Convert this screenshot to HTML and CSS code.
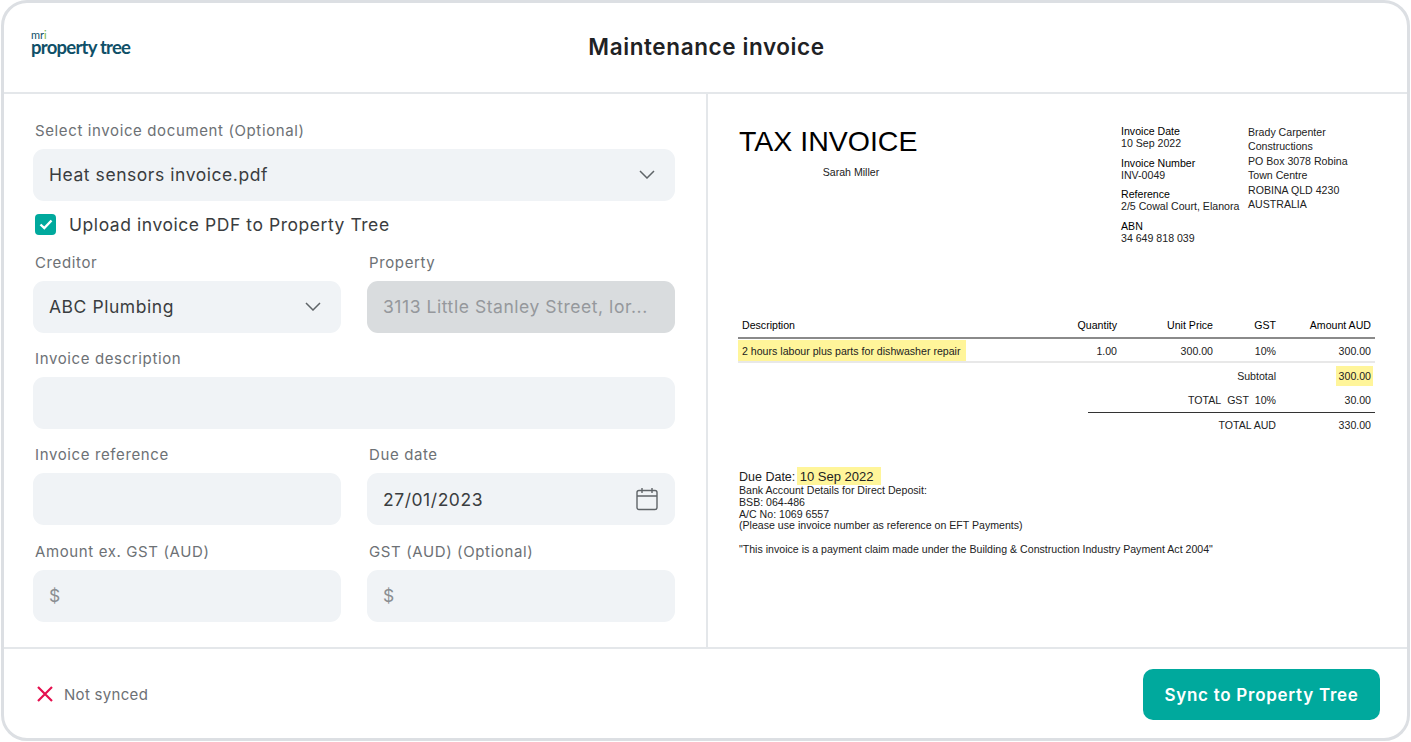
FILE: index.html
```html
<!DOCTYPE html>
<html lang="en">
<head>
    <meta charset="UTF-8">
    <title>Maintenance invoice</title>
    <link rel="stylesheet" href="styles.css">
</head>
<body>
    <div class="frame">
        <header class="top">
            <div class="logo">
                <span class="logo-mri">mr<span class="logo-i">i</span></span>
                <span class="logo-name">property tree</span>
            </div>
            <h1 class="title">Maintenance invoice</h1>
        </header>

        <main class="panes">
            <form class="form">
                <div class="group wide">
                    <label class="label">Select invoice document (Optional)</label>
                    <div class="field field-doc">
                        <span>Heat sensors invoice.pdf</span>
                        <svg class="chev" width="16" height="9" viewBox="0 0 16 9" fill="none"><path d="M1 1l7 7 7-7" stroke="#5f6468" stroke-width="1.5"/></svg>
                    </div>
                </div>
                <div class="check-row wide">
                    <span class="check">
                        <svg width="14" height="11" viewBox="0 0 14 11" fill="none"><path d="M1.5 5.5l3.8 3.6 7.2-7.6" stroke="#fff" stroke-width="2.4"/></svg>
                    </span>
                    <span>Upload invoice PDF to Property Tree</span>
                </div>
                <div class="group">
                    <label class="label">Creditor</label>
                    <div class="field">
                        <span>ABC Plumbing</span>
                        <svg class="chev" width="16" height="9" viewBox="0 0 16 9" fill="none"><path d="M1 1l7 7 7-7" stroke="#5f6468" stroke-width="1.5"/></svg>
                    </div>
                </div>
                <div class="group">
                    <label class="label">Property</label>
                    <div class="field disabled"><span>3113 Little Stanley Street, lor...</span></div>
                </div>
                <div class="group wide">
                    <label class="label">Invoice description</label>
                    <div class="field"></div>
                </div>
                <div class="group">
                    <label class="label">Invoice reference</label>
                    <div class="field"></div>
                </div>
                <div class="group">
                    <label class="label">Due date</label>
                    <div class="field">
                        <span>27/01/2023</span>
                        <svg class="cal" width="22" height="24" viewBox="0 0 22 24" fill="none" stroke="#5f6468" stroke-width="1.4"><rect x="1" y="3.5" width="20" height="19" rx="2"/><path d="M1 9h20M6 1v5M16 1v5"/></svg>
                    </div>
                </div>
                <div class="group">
                    <label class="label">Amount ex. GST (AUD)</label>
                    <div class="field muted"><span>$</span></div>
                </div>
                <div class="group">
                    <label class="label">GST (AUD) (Optional)</label>
                    <div class="field muted"><span>$</span></div>
                </div>
            </form>

            <section class="invoice">
                <div class="inv-head">
                    <div class="inv-brand">
                        <div class="inv-title">TAX INVOICE</div>
                        <div class="inv-name">Sarah Miller</div>
                    </div>
                    <div class="inv-meta">
                        <div class="meta-item"><div class="meta-key">Invoice Date</div><div>10 Sep 2022</div></div>
                        <div class="meta-item"><div class="meta-key">Invoice Number</div><div>INV-0049</div></div>
                        <div class="meta-item"><div class="meta-key">Reference</div><div>2/5 Cowal Court, Elanora</div></div>
                        <div class="meta-item"><div class="meta-key">ABN</div><div>34 649 818 039</div></div>
                    </div>
                    <div class="inv-addr">Brady Carpenter<br>Constructions<br>PO Box 3078 Robina<br>Town Centre<br>ROBINA QLD 4230<br>AUSTRALIA</div>
                </div>

                <div class="row row-head">
                    <span class="col-desc">Description</span>
                    <span class="col-qty">Quantity</span>
                    <span class="col-price">Unit Price</span>
                    <span class="col-gst">GST</span>
                    <span class="col-amt">Amount AUD</span>
                </div>
                <div class="row row-item">
                    <span class="col-desc"><span class="mark mark-desc">2 hours labour plus parts for dishwasher repair</span></span>
                    <span class="col-qty">1.00</span>
                    <span class="col-price">300.00</span>
                    <span class="col-gst">10%</span>
                    <span class="col-amt">300.00</span>
                </div>
                <div class="total">
                    <span class="total-key">Subtotal</span>
                    <span class="total-val"><span class="mark mark-sub">300.00</span></span>
                </div>
                <div class="total total-gst">
                    <span class="total-key">TOTAL&nbsp; GST&nbsp; 10%</span>
                    <span class="total-val">30.00</span>
                </div>
                <div class="total total-aud">
                    <span class="total-key">TOTAL AUD</span>
                    <span class="total-val">330.00</span>
                </div>

                <div class="inv-foot">
                    <div class="due">Due Date: <span class="mark mark-due">10 Sep 2022&nbsp;</span></div>
                    <div>Bank Account Details for Direct Deposit:</div>
                    <div>BSB: 064-486</div>
                    <div>A/C No: 1069 6557</div>
                    <div>(Please use invoice number as reference on EFT Payments)</div>
                    <p class="claim">"This invoice is a payment claim made under the Building &amp; Construction Industry Payment Act 2004"</p>
                </div>
            </section>
        </main>

        <footer class="bottom">
            <div class="status">
                <svg width="18" height="18" viewBox="0 0 18 18" fill="none"><path d="M2 2l14 14M16 2L2 16" stroke="#e5104f" stroke-width="2.2"/></svg>
                <span>Not synced</span>
            </div>
            <button class="sync" type="button">Sync to Property Tree</button>
        </footer>
    </div>
</body>
</html>
```

FILE: styles.css
```css
* {
    box-sizing: border-box;
}

body {
    margin: 0;
    background: #fff;
    font-family: 'Inter', sans-serif;
    color: #3a3d40;
}

.frame {
    width: 1409px;
    height: 741px;
    margin: 0 1px;
    border: 3px solid #dcdfe3;
    border-radius: 26px;
    display: flex;
    flex-direction: column;
    overflow: hidden;
}

.top {
    height: 91px;
    flex: none;
    position: relative;
    display: flex;
    align-items: center;
    justify-content: center;
    border-bottom: 2px solid #e4e7ea;
}

.title {
    margin: 0 0 2px 2px;
    font-size: 22.5px;
    font-weight: 600;
    letter-spacing: 0.6px;
    color: #1f2224;
}

.logo {
    position: absolute;
    left: 27px;
    top: 28px;
    display: flex;
    flex-direction: column;
    color: #0f5068;
}

.logo-mri {
    font-family: 'Lato', sans-serif;
    font-size: 11px;
    line-height: 7px;
    height: 7px;
    font-weight: 400;
}

.logo-i {
    color: #7ab648;
}

.logo-name {
    font-family: 'Lato', sans-serif;
    font-size: 18.5px;
    line-height: 18px;
    font-weight: 700;
    letter-spacing: -0.75px;
}

.panes {
    flex: 1;
    display: flex;
    min-height: 0;
}

.form {
    width: 704px;
    flex: none;
    padding: 26px 30px 0 29px;
    display: grid;
    grid-template-columns: 308px 308px;
    grid-auto-rows: min-content;
    column-gap: 26px;
    row-gap: 15.33px;
    border-right: 2px solid #e4e7ea;
}

.wide {
    grid-column: 1 / 3;
}

.label {
    display: block;
    margin: 0 0 7px 2px;
    font-size: 15px;
    line-height: 22px;
    color: #6d7175;
    letter-spacing: 0.62px;
}

.field {
    height: 52px;
    padding: 0 16px;
    border-radius: 11px;
    background: #f0f3f6;
    display: flex;
    align-items: center;
    justify-content: space-between;
    font-size: 17.5px;
    letter-spacing: 0.55px;
    white-space: nowrap;
    color: #3a3d40;
}

.field-doc {
    padding-bottom: 2px;
}

.field.disabled {
    background: #d9dcde;
    color: #95989c;
}

.field.muted {
    color: #8a8e92;
}

.chev {
    margin-right: 4px;
}

.cal {
    margin-right: 1px;
}

.check-row {
    display: flex;
    align-items: center;
    gap: 13px;
    height: 22px;
    margin: -3px 0 1px 2px;
    font-size: 17.5px;
    letter-spacing: 0.55px;
}

.check {
    width: 21px;
    height: 21px;
    border-radius: 4px;
    background: #00a99d;
    display: flex;
    align-items: center;
    justify-content: center;
}

.invoice {
    flex: 1;
    min-width: 0;
    padding: 33px 32px 0 30px;
    font-family: 'Liberation Sans', sans-serif;
    font-size: 10.6px;
    color: #222;
}

.inv-head {
    display: flex;
    height: 192px;
}

.inv-brand {
    width: 383px;
    flex: none;
}

.inv-title {
    margin: -1px 0 0 1px;
    font-size: 28.5px;
    line-height: 30px;
    color: #000;
}

.inv-name {
    width: 226px;
    margin-top: 10px;
    text-align: center;
}

.inv-meta {
    width: 127px;
    flex: none;
    margin-top: -2px;
    line-height: 12px;
}

.meta-item {
    margin-bottom: 7.5px;
}

.meta-key {
    color: #000;
}

.inv-addr {
    margin-top: -2px;
    line-height: 14.4px;
}

.row {
    display: flex;
    padding: 0 4px;
}

.row-head {
    height: 18px;
    border-bottom: 2px solid #8a8a8a;
    color: #000;
    box-sizing: content-box;
}

.row-item {
    height: 21px;
    padding-top: 1px;
    align-items: center;
    border-bottom: 2px solid #e8e8e8;
    box-sizing: content-box;
}

.col-desc {
    flex: 1;
}

.col-qty {
    width: 80px;
    text-align: right;
}

.col-price {
    width: 96px;
    text-align: right;
}

.col-gst {
    width: 63px;
    text-align: right;
}

.col-amt {
    width: 95px;
    text-align: right;
}

.mark {
    background: #fff59a;
}

.mark-desc {
    margin-left: -4px;
    padding: 5px 6px 4px 4px;
}

.mark-sub {
    margin-right: -2px;
    padding: 4px 2px 4px 3px;
}

.mark-due {
    margin-left: -2px;
    padding: 2px 4px 1px 3px;
    font-size: 13px;
}

.total {
    display: flex;
    justify-content: flex-end;
    align-items: center;
    height: 25px;
    padding-right: 4px;
}

.total-key {
    width: 188px;
    text-align: right;
}

.total-val {
    width: 95px;
    text-align: right;
}

.total-gst {
    margin-left: 350px;
    border-bottom: 1px solid #333;
}

.total-aud {
    height: 23px;
}

.inv-foot {
    margin-top: 33px;
    padding-left: 1px;
    line-height: 11.8px;
}

.due {
    font-size: 12.5px;
    line-height: 15px;
}

.claim {
    margin: 12px 0 0;
}

.bottom {
    height: 91px;
    flex: none;
    display: flex;
    align-items: center;
    justify-content: space-between;
    padding: 1px 27px 0 32px;
    border-top: 2px solid #e4e7ea;
}

.status {
    display: flex;
    align-items: center;
    gap: 10px;
    font-size: 15px;
    letter-spacing: 0.3px;
    color: #6d7175;
}

.sync {
    width: 237px;
    height: 51px;
    padding-top: 3px;
    border: none;
    border-radius: 10px;
    background: #00a99d;
    color: #fff;
    font-family: 'Inter', sans-serif;
    font-size: 17px;
    font-weight: 600;
    letter-spacing: 0.73px;
}
```
